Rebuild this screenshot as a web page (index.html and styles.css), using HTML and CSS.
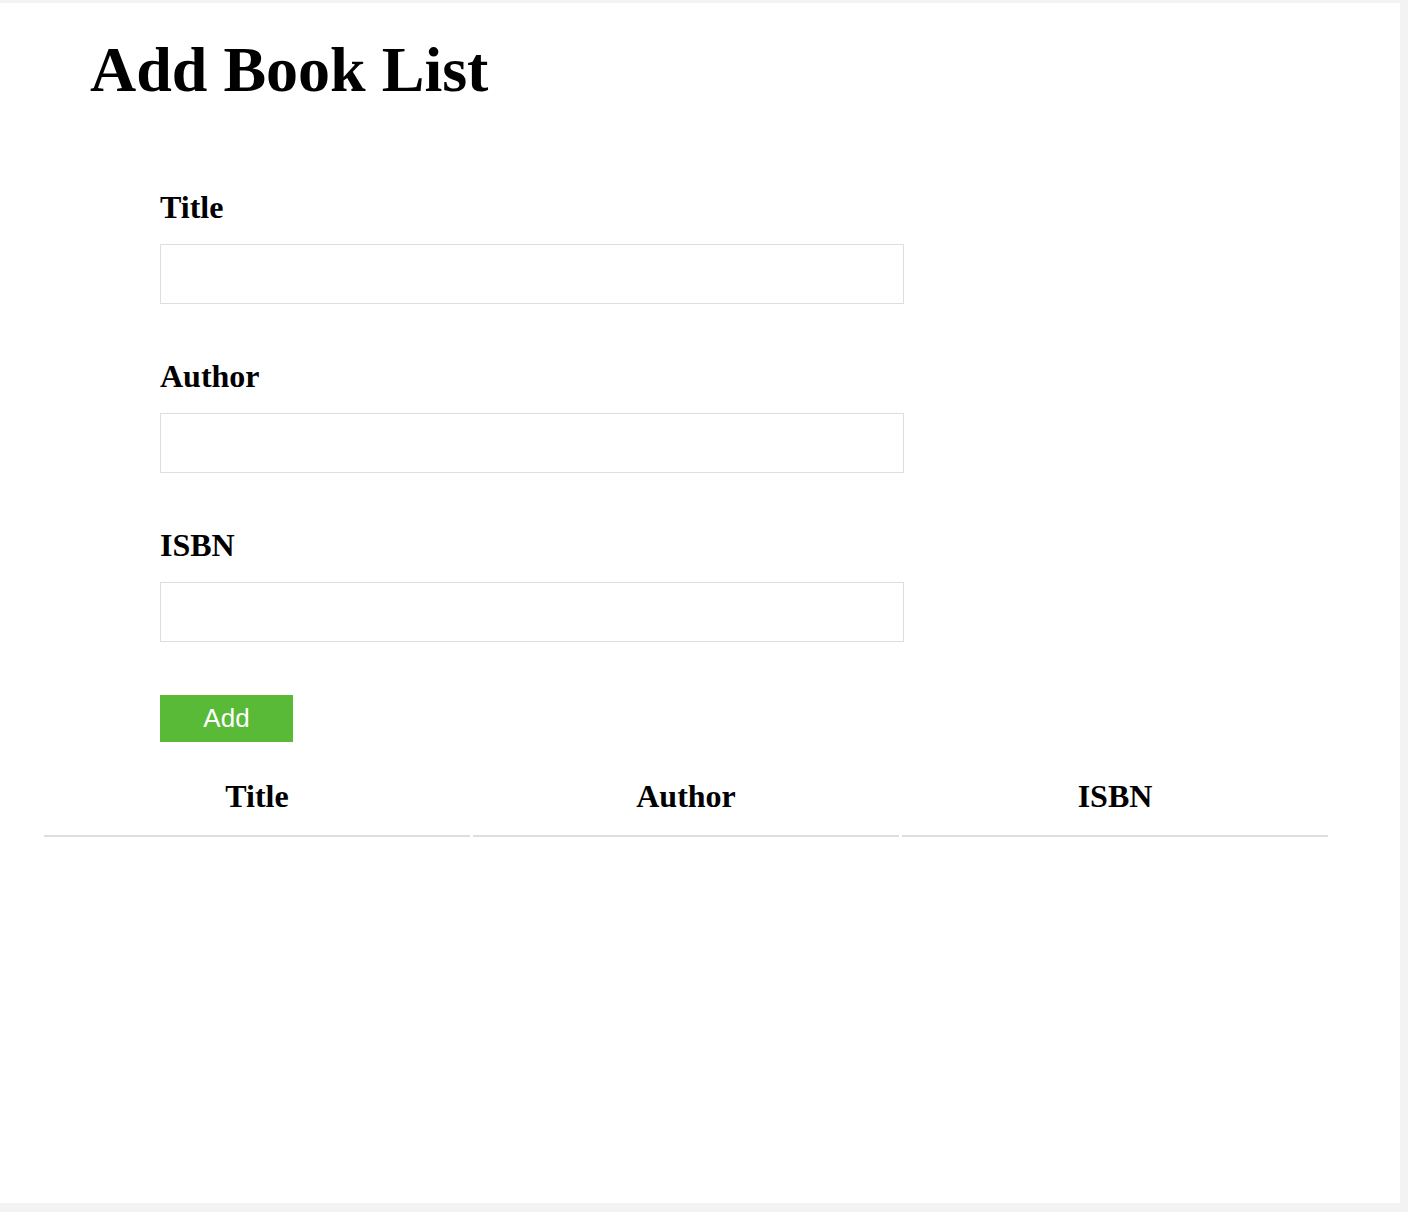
FILE: index.html
```html
<!DOCTYPE html>
<html lang="en">
<head>
<meta charset="utf-8">
<title>Add Book List</title>
<link rel="stylesheet" href="styles.css">
</head>
<body>
<div class="page">
  <h1 class="page-title">Add Book List</h1>
  <form class="book-form">
    <div class="field">
      <label class="field-label" for="title">Title</label>
      <input class="field-input" id="title" type="text">
    </div>
    <div class="field">
      <label class="field-label" for="author">Author</label>
      <input class="field-input" id="author" type="text">
    </div>
    <div class="field field-last">
      <label class="field-label" for="isbn">ISBN</label>
      <input class="field-input" id="isbn" type="text">
    </div>
    <button class="add-btn" type="button">Add</button>
  </form>
  <table class="book-table">
    <thead>
      <tr>
        <th>Title</th>
        <th>Author</th>
        <th>ISBN</th>
      </tr>
    </thead>
    <tbody></tbody>
  </table>
</div>
</body>
</html>
```

FILE: styles.css
```css
html, body {
  margin: 0;
  padding: 0;
}

body {
  background: #f3f3f3;
  font-family: "Liberation Serif", "Times New Roman", serif;
  color: #000;
  padding-top: 3px;
}

.page {
  background: #fff;
  width: 1400px;
  height: 1200px;
  box-sizing: border-box;
  padding-top: 30px;
  overflow: hidden;
}

.page-title {
  margin: 0 0 0 90px;
  font-size: 64px;
  font-weight: bold;
}

.book-form {
  margin: 82px 0 0 160px;
  display: flex;
  flex-direction: column;
  align-items: flex-start;
}

.field {
  display: flex;
  flex-direction: column;
  margin-bottom: 54px;
}

.field-last {
  margin-bottom: 53px;
}

.field-label {
  font-size: 32px;
  font-weight: bold;
  margin-bottom: 18px;
}

.field-input {
  width: 744px;
  height: 60px;
  box-sizing: border-box;
  border: 1px solid #dedede;
  margin: 0;
  padding: 0 10px;
  font-size: 20px;
  outline: none;
}

.add-btn {
  width: 133px;
  height: 47px;
  background: #58ba37;
  color: #fff;
  border: none;
  margin: 0;
  padding: 0;
  font-family: "Liberation Sans", Arial, sans-serif;
  font-size: 26px;
  cursor: pointer;
}

.book-table {
  margin: 33px 0 0 41px;
  width: 1290px;
  border-spacing: 3px;
  table-layout: fixed;
}

.book-table th {
  font-size: 32px;
  font-weight: bold;
  text-align: center;
  padding: 0 0 20px;
  border-bottom: 2px solid #dedede;
}
```
